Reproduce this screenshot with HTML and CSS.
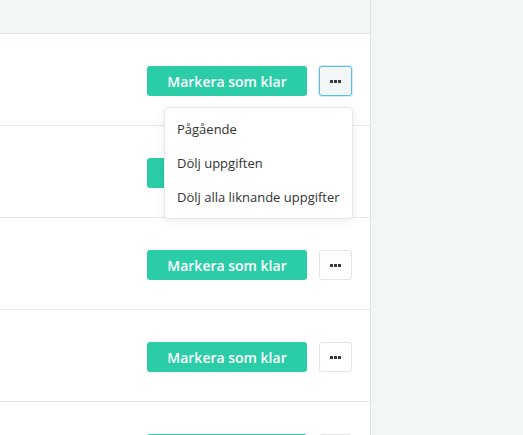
FILE: index.html
```html
<!DOCTYPE html>
<html lang="sv">
<head>
<meta charset="utf-8">
<link rel="stylesheet" href="styles.css">
</head>
<body>
<div class="layout">
  <main class="panel">
    <div class="panel-head"></div>
    <div class="row">
      <div class="actions">
        <button class="btn-done">Markera som klar</button>
        <div class="more-wrap">
          <button class="btn-more is-open"><svg width="11" height="3" viewBox="0 0 11 3"><rect x="0" y="0" width="3" height="3"/><rect x="4" y="0" width="3" height="3"/><rect x="8" y="0" width="3" height="3"/></svg></button>
          <ul class="menu">
            <li>Pågående</li>
            <li>Dölj uppgiften</li>
            <li>Dölj alla liknande uppgifter</li>
          </ul>
        </div>
      </div>
    </div>
    <div class="row">
      <div class="actions">
        <button class="btn-done">Markera som klar</button>
        <button class="btn-more"><svg width="11" height="3" viewBox="0 0 11 3"><rect x="0" y="0" width="3" height="3"/><rect x="4" y="0" width="3" height="3"/><rect x="8" y="0" width="3" height="3"/></svg></button>
      </div>
    </div>
    <div class="row">
      <div class="actions">
        <button class="btn-done">Markera som klar</button>
        <button class="btn-more"><svg width="11" height="3" viewBox="0 0 11 3"><rect x="0" y="0" width="3" height="3"/><rect x="4" y="0" width="3" height="3"/><rect x="8" y="0" width="3" height="3"/></svg></button>
      </div>
    </div>
    <div class="row">
      <div class="actions">
        <button class="btn-done">Markera som klar</button>
        <button class="btn-more"><svg width="11" height="3" viewBox="0 0 11 3"><rect x="0" y="0" width="3" height="3"/><rect x="4" y="0" width="3" height="3"/><rect x="8" y="0" width="3" height="3"/></svg></button>
      </div>
    </div>
    <div class="row">
      <div class="actions">
        <button class="btn-done">Markera som klar</button>
        <button class="btn-more"><svg width="11" height="3" viewBox="0 0 11 3"><rect x="0" y="0" width="3" height="3"/><rect x="4" y="0" width="3" height="3"/><rect x="8" y="0" width="3" height="3"/></svg></button>
      </div>
    </div>
  </main>
  <aside class="side"></aside>
</div>
</body>
</html>
```
FILE: styles.css
```css
html, body {
  margin: 0;
  padding: 0;
  height: 100%;
  overflow: hidden;
}
body {
  font-family: "Open Sans", "Noto Sans", sans-serif;
  background: #f3f6f7;
  color: #333;
}
.layout {
  display: flex;
  height: 100%;
}
.panel {
  width: 370px;
  flex: none;
  border-right: 1px solid #dfe3e5;
  background: #fff;
}
.side {
  flex: 1;
  background: #f3f6f7;
}
.panel-head {
  height: 33px;
  background: #f3f6f7;
  border-bottom: 1px solid #dfe3e5;
}
.row {
  height: 91px;
  border-bottom: 1px solid #e3e5e6;
  box-sizing: content-box;
}
.actions {
  display: flex;
  justify-content: flex-end;
  align-items: flex-start;
  gap: 12px;
  padding: 32px 18px 0 0;
}
.btn-done {
  width: 160px;
  height: 30px;
  border: none;
  border-radius: 3px;
  background: #2bcda7;
  color: #fff;
  font-family: "Open Sans", sans-serif;
  font-weight: 600;
  font-size: 14px;
  padding: 0;
  cursor: pointer;
}
.more-wrap {
  position: relative;
}
.btn-more {
  width: 33px;
  height: 30px;
  border: 1px solid #e2e4e6;
  border-radius: 3px;
  background: #fff;
  padding: 0;
  display: flex;
  align-items: center;
  justify-content: center;
  fill: #333a45;
}
.btn-more svg {
  margin-top: 1px;
}
.btn-more.is-open {
  border-color: #5dbbe9;
  background: #f3f6f7;
  box-shadow: 0 0 0 1px #d6ecf8;
}
.menu {
  position: absolute;
  top: 41px;
  right: -1px;
  width: 187px;
  margin: 0;
  padding: 4px 0;
  list-style: none;
  background: #fff;
  border: 1px solid #e6e8ea;
  border-radius: 4px;
  box-shadow: 0 2px 8px rgba(0, 0, 0, 0.08);
  z-index: 2;
}
.menu li {
  padding: 8px 12px;
  font-size: 13px;
  line-height: 18px;
  color: #333;
  white-space: nowrap;
}
```
